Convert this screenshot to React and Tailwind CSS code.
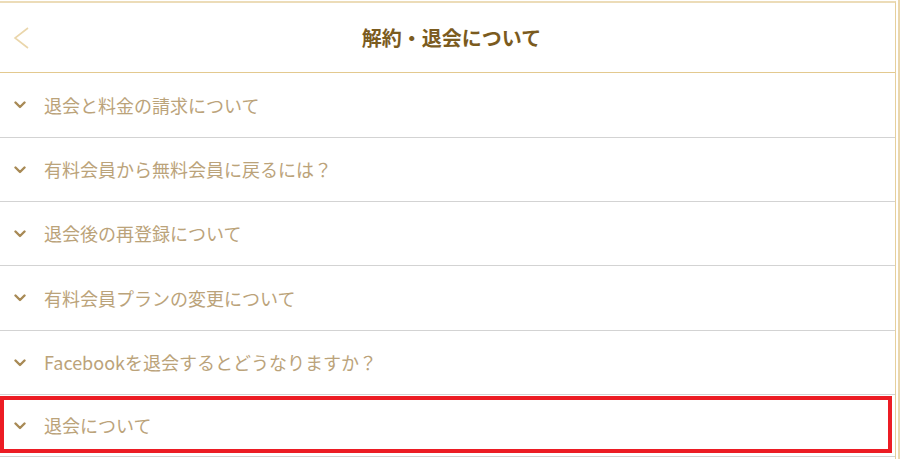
import React from "react";

const items = [
  { label: "退会と料金の請求について", h: "h-[65px]" },
  { label: "有料会員から無料会員に戻るには？", h: "h-[64px]" },
  { label: "退会後の再登録について", h: "h-[64px]" },
  { label: "有料会員プランの変更について", h: "h-[65px]" },
  { label: "Facebookを退会するとどうなりますか？", h: "h-[64px]" },
];

const Chevron = () => (
  <svg width="12" height="8" viewBox="0 0 12 8" className="shrink-0">
    <path d="M1.5 1.5 L6 6 L10.5 1.5" fill="none" stroke="#a88a55" strokeWidth="2.4" strokeLinecap="round" strokeLinejoin="round" />
  </svg>
);

const Row = ({ label, h, last }) => (
  <div className={`relative flex items-center pl-[14px] ${h} border-b border-[#d3d3d3]`}>
    <Chevron />
    <span className="ml-[18px] text-[18px] text-[#bba37a]">{label}</span>
    {last && (
      <div className="absolute left-0 top-px w-[892px] h-[57px] border-4 border-[#ec1c24]" />
    )}
  </div>
);

const App = () => {
  return (
    <div
      className="w-[900px] h-[459px] overflow-hidden bg-white border-r-2 border-[#ead7ad] pr-[2px]"
      style={{ fontFamily: '"Noto Sans CJK JP", "Noto Sans", sans-serif' }}
    >
      <div className="w-[896px] h-full mt-px border-t-2 border-r border-[#ecdcb8] border-r-[#e6cf9c]">
        {/* header */}
        <div className="relative h-[70px] flex items-center justify-center border-b border-[#e3c98f]">
          <svg width="16" height="22" viewBox="0 0 16 22" className="absolute left-[13px] top-[24px]">
            <path d="M15 1 L2 11 L15 21" fill="none" stroke="#ead6ab" strokeWidth="1.6" />
          </svg>
          <h1 className="ml-[8px] text-[20px] font-bold text-[#7b5b1e]">解約・退会について</h1>
        </div>
        {items.map((it) => (
          <Row key={it.label} label={it.label} h={it.h} />
        ))}
        <Row label="退会について" h="h-[62px]" last />
      </div>
    </div>
  );
};

export default App;
